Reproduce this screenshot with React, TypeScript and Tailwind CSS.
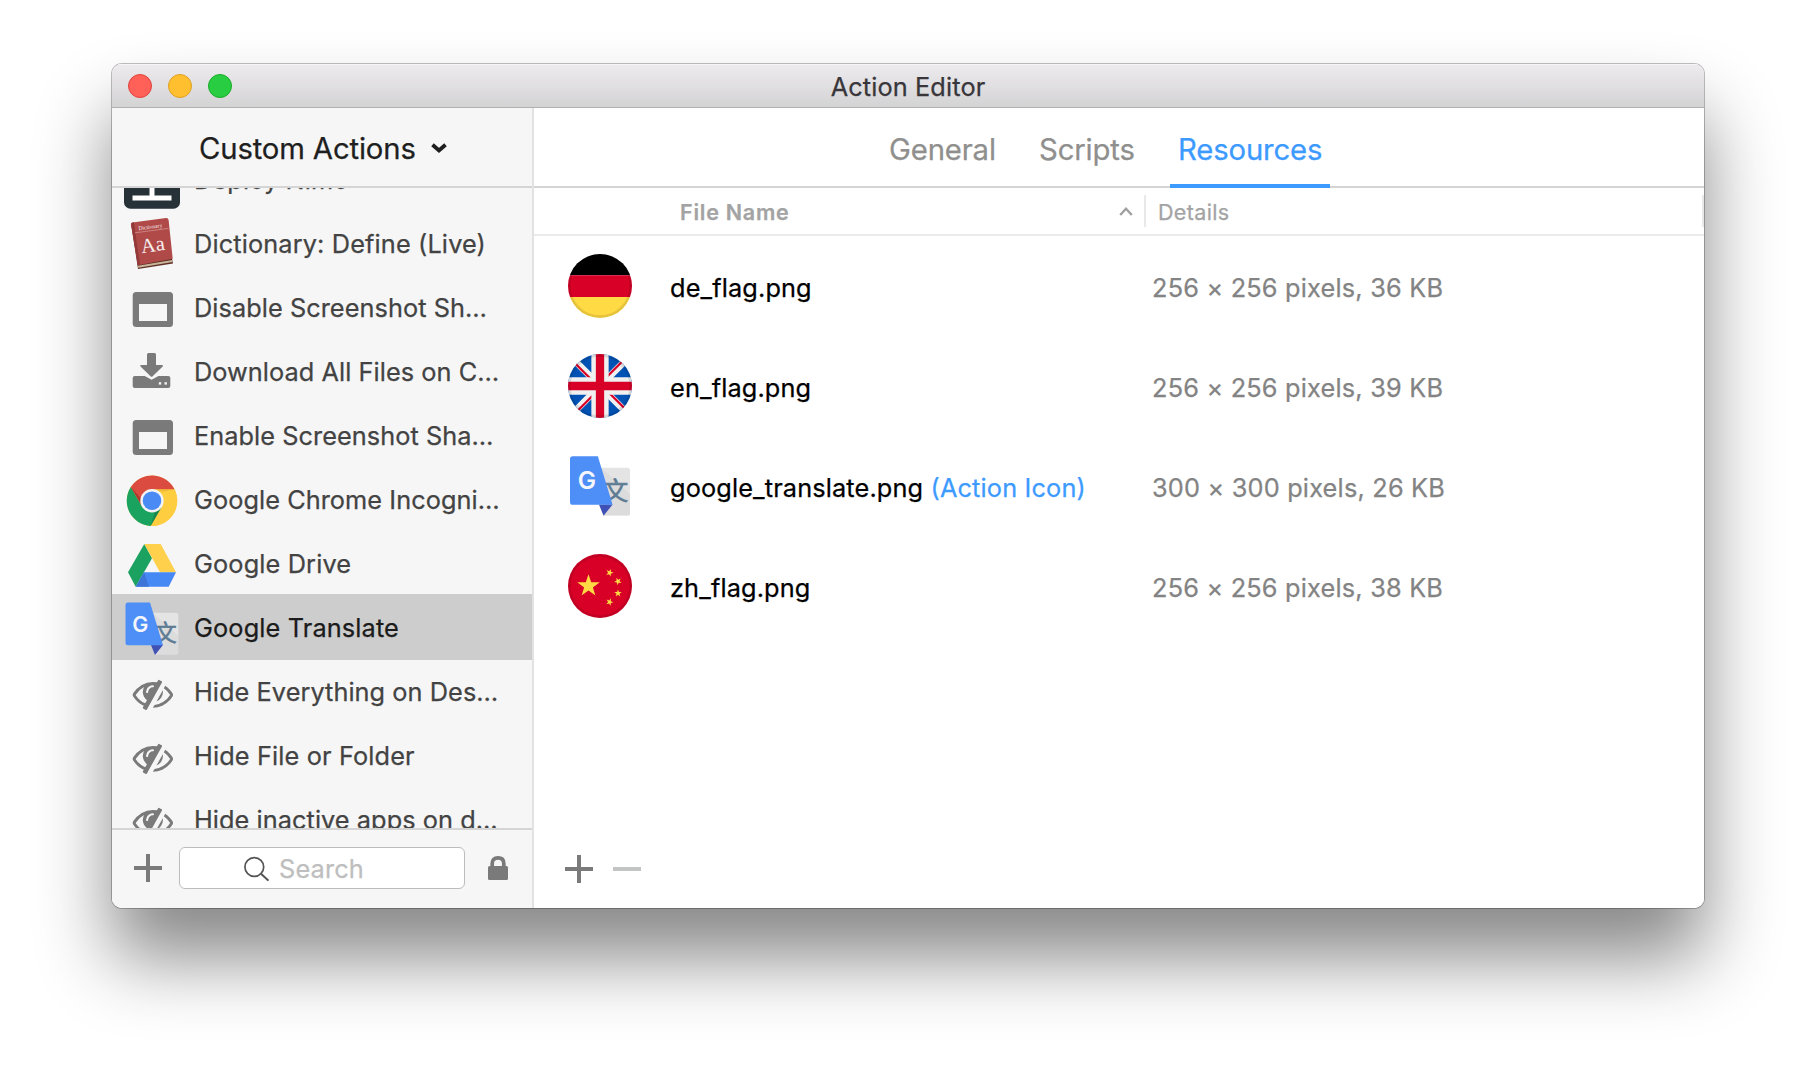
import { ReactNode } from "react";

const YELLOW = "#ffda44";
const RED = "#d80027";

function star(cx: number, cy: number, r: number, turn: number) {
  return Array.from({ length: 10 }, (_, i) => {
    const a = ((i * 36 - 90 + turn) * Math.PI) / 180;
    const d = i % 2 ? r * 0.39 : r;
    return `${(cx + d * Math.cos(a)).toFixed(2)},${(cy + d * Math.sin(a)).toFixed(2)}`;
  }).join(" ");
}

/* Sidebar icons share a 60x64 canvas whose x axis starts at 120. */
function RowIcon({ children }: { children: ReactNode }) {
  return (
    <svg viewBox="120 0 60 64" className="h-16 w-[60px] shrink-0">
      {children}
    </svg>
  );
}

function DeployIcon() {
  return (
    <RowIcon>
      <rect x="124" y="6" width="56" height="55.7" rx="6.5" fill="#263238" />
      <path d="M149.5 20h5v28.5h17v5h-39v-5h17z" fill="#fff" />
    </RowIcon>
  );
}

function DictionaryIcon() {
  return (
    <RowIcon>
      <path d="M131 12l7 46 35-5.500-1.200-6z" fill="#5e2f28" />
      <path d="M138 54.800l34.300-5.800.2 2-34.300 5.800z" fill="#c9b79a" />
      <path d="M132.500 11.400l33.500-4.300q2.200-.2 2.600 2l4.100 38.600-34.800 6.500-6.900-40.500q-.4-2 1.500-2.300z" fill="#b04a49" />
      <path d="M131.300 14l6.600 40.200 2.200-.4-6.200-42.600-1.400.2q-1.500.4-1.200 2.600z" fill="#94393a" />
      <path d="M135 21.800l33.400-4.400" stroke="#d99a96" strokeWidth=".7" />
      <g transform="rotate(-8 153 35)" fill="#f7eeee">
        <text x="152.800" y="40.500" fontSize="20.500" textAnchor="middle" fontFamily="Liberation Serif, serif">Aa</text>
        <text x="153" y="17.500" fontSize="5.600" textAnchor="middle" fontFamily="Liberation Serif, serif">Dictionary</text>
      </g>
    </RowIcon>
  );
}

function WindowIcon() {
  return (
    <RowIcon>
      <rect x="132.700" y="17" width="40.300" height="35" rx="3.500" fill="#7a7a7a" />
      <rect x="139" y="29" width="28" height="17" fill="#f6f6f6" />
    </RowIcon>
  );
}

function DownloadIcon() {
  return (
    <RowIcon>
      <rect x="132.700" y="37" width="37.600" height="12" rx="2" fill="#7a7a7a" />
      <path d="M142 35.500l9.600 5.300 9.600-5.300z" fill="#f6f6f6" />
      <path d="M147 15.500q0-1.500 1.500-1.500h6q1.500 0 1.500 1.500V26h6q1.700.3.700 1.600l-10.300 9.800q-.8.600-1.600 0l-10.300-9.800q-1-1.300.7-1.600h5.800z" fill="#7a7a7a" />
      <rect x="158.800" y="43.200" width="2.400" height="2.400" fill="#f6f6f6" />
      <rect x="164.500" y="43.200" width="2.400" height="2.400" fill="#f6f6f6" />
    </RowIcon>
  );
}

function ChromeIcon() {
  const blade = "M0-11.500H22.500A25.300 25.300 0 0 0-21.200-13.800L-9.960 5.750 0 0z";
  return (
    <RowIcon>
      <g transform="translate(152 33.700)">
        <circle r="25.200" fill="#ffcd40" />
        <path d={blade} fill="#ffcd40" transform="rotate(120)" />
        <path d={blade} fill="#1aa25f" transform="rotate(240)" />
        <path d={blade} fill="#dc4b3f" />
        <path d="M0-11.500H22.500L11-9z" fill="#e0a52e" opacity=".45" />
        <path d="M-21.200-13.800L-9.960 5.750-11.500-3z" fill="#8d2f25" opacity=".6" />
        <path d="M9.960 5.750L-1.300 25.200 3 11z" fill="#0f6b40" opacity=".5" />
        <circle r="11.700" fill="#f3f3f3" />
        <circle r="9.300" fill="#4a8af4" />
      </g>
    </RowIcon>
  );
}

function DriveIcon() {
  return (
    <RowIcon>
      <path d="M144.300 13L152 27.300 135.700 55.700 128 41.300z" fill="#1ba260" />
      <path d="M144.300 13h16.400L176 41.300h-16z" fill="#ffd04b" />
      <path d="M176 41.300l-7.300 14.400h-33L144 41.300z" fill="#4688f4" />
      <path d="M144 41.300l5 14.400h-13.300z" fill="#3a6fd0" opacity=".8" />
    </RowIcon>
  );
}

function TranslateArt() {
  return (
    <>
      <path d="M150 17.700h26q2.300 0 2.300 2.300v37.400q0 2.300-2.300 2.300h-20.800z" fill="#e4e4e5" />
      <path d="M153 18l25.300 23v16.400q0 2.300-2.300 2.300h-20.800L163 50z" fill="#d3d3d5" opacity=".5" />
      <text x="165.600" y="46.200" fontSize="22.500" textAnchor="middle" fill="#5d7b93" stroke="#5d7b93" strokeWidth=".5" fontFamily="Noto Sans CJK SC, sans-serif">文</text>
      <path d="M151 50h12l-8 10z" fill="#3f51b5" />
      <path d="M128 7.500h22L163 50.300h-35q-2.500 0-2.500-2.500V10q0-2.500 2.500-2.500z" fill="#4d8ff7" />
      <text x="140.300" y="36.700" fontSize="21.500" textAnchor="middle" fill="#f4f6fb" fontFamily="Inter, sans-serif" fontWeight="600">G</text>
    </>
  );
}

function TranslateIcon() {
  return (
    <RowIcon>
      <TranslateArt />
    </RowIcon>
  );
}

function HiddenIcon() {
  return (
    <RowIcon>
      <g transform="translate(132.700 14.300) scale(.0225)">
        <path
          fill="#7a7a7a"
          d="M555 1335l78-141q-87-63-136-159t-49-203q0-121 61-225-229 117-381 353 167 258 427 375zm389-759q0-20-14-34t-34-14q-125 0-214.500 89.500t-89.500 214.500q0 20 14 34t34 14 34-14 14-34q0-86 61-147t147-61q20 0 34-14t14-34zm363-191q0 7-1 9-106 189-316 567t-315 566l-49 89q-10 16-28 16-12 0-134-70-16-10-16-28 0-12 44-87-143-65-263.500-173t-208.500-245q-20-31-20-69t20-69q153-235 380-371t496-136q89 0 180 17l54-97q10-16 28-16 5 0 18 6t31 15.500 33 18.500 31.500 18.500 19.500 11.500q16 10 16 27zm37 447q0 139-79 253.500t-209 164.500l280-502q8 45 8 84zm448 128q0 35-20 69-39 64-109 145-150 172-347.500 267t-419.500 95l74-132q212-18 392.500-137t301.500-307q-115-179-282-294l63-112q95 64 182.500 153t144.500 184q20 34 20 69z"
        />
      </g>
    </RowIcon>
  );
}

function Flag({ id, children }: { id: string; children: ReactNode }) {
  return (
    <svg viewBox="0 0 64 64" className="size-16">
      <clipPath id={id}>
        <circle cx="32" cy="32" r="32" />
      </clipPath>
      <g clipPath={`url(#${id})`}>
        {children}
        <circle cx="32" cy="32" r="30.700" fill="none" stroke="#000" strokeOpacity=".1" strokeWidth="2.700" />
      </g>
    </svg>
  );
}

function GermanFlag() {
  return (
    <Flag id="flag-de">
      <path d="M0 0h64v21.300H0z" fill="#000" />
      <path d="M0 21.300h64v21.700H0z" fill={RED} />
      <path d="M0 43h64v21H0z" fill={YELLOW} />
    </Flag>
  );
}

function BritishFlag() {
  return (
    <Flag id="flag-en">
      <path d="M0 0h64v64H0z" fill="#0052b4" />
      <path d="M0 0l64 64M64 0L0 64" stroke="#f0f0f0" strokeWidth="6.800" />
      {["rotate(0 32 32)", "rotate(90 32 32)", "rotate(180 32 32)", "rotate(270 32 32)"].map((t) => (
        <path key={t} d="M5 7.300l19 19" stroke={RED} strokeWidth="2.300" transform={t} />
      ))}
      <path d="M32 0v64M0 32h64" stroke="#f0f0f0" strokeWidth="17.300" />
      <path d="M32 0v64M0 32h64" stroke={RED} strokeWidth="8.300" />
    </Flag>
  );
}

function ChineseFlag() {
  return (
    <Flag id="flag-zh">
      <path d="M0 0h64v64H0z" fill={RED} />
      <g fill={YELLOW}>
        <polygon points={star(20.5, 32, 11.8, 0)} />
        <polygon points={star(41.6, 18.7, 3.9, 20)} />
        <polygon points={star(50, 27.3, 3.9, 45)} />
        <polygon points={star(50, 39.3, 3.9, 0)} />
        <polygon points={star(41.6, 48, 3.9, 20)} />
      </g>
    </Flag>
  );
}

function TranslateFile() {
  return (
    <svg viewBox="125.500 7.500 52.800 52.500" className="size-15">
      <TranslateArt />
    </svg>
  );
}

function Plus() {
  return (
    <svg viewBox="0 0 28 28" className="size-7 shrink-0">
      <path d="M12 0h4v12h12v4H16v12h-4V16H0v-4h12z" fill="#7a7a7a" />
    </svg>
  );
}

const actions = [
  { name: "Deploy Nimo", Icon: DeployIcon },
  { name: "Dictionary: Define (Live)", Icon: DictionaryIcon },
  { name: "Disable Screenshot Sh…", Icon: WindowIcon },
  { name: "Download All Files on C…", Icon: DownloadIcon },
  { name: "Enable Screenshot Sha…", Icon: WindowIcon },
  { name: "Google Chrome Incogni…", Icon: ChromeIcon },
  { name: "Google Drive", Icon: DriveIcon },
  { name: "Google Translate", Icon: TranslateIcon, selected: true },
  { name: "Hide Everything on Des…", Icon: HiddenIcon },
  { name: "Hide File or Folder", Icon: HiddenIcon },
  { name: "Hide inactive apps on d…", Icon: HiddenIcon },
];

const files = [
  { name: "de_flag.png", details: "256 × 256 pixels, 36 KB", Icon: GermanFlag },
  { name: "en_flag.png", details: "256 × 256 pixels, 39 KB", Icon: BritishFlag },
  { name: "google_translate.png", note: "(Action Icon)", details: "300 × 300 pixels, 26 KB", Icon: TranslateFile },
  { name: "zh_flag.png", details: "256 × 256 pixels, 38 KB", Icon: ChineseFlag },
];

function TitleBar() {
  return (
    <header className="flex h-11 shrink-0 items-center border-b border-[#b3afb4] bg-linear-to-b from-[#edebee] to-[#d4d3d4] pl-4 shadow-[inset_0_1px_0_#f7f6f7]">
      <div className="flex w-[104px] shrink-0 gap-4">
        <i className="size-6 rounded-full border border-[#e0443e] bg-[#ff6058]" />
        <i className="size-6 rounded-full border border-[#dea123] bg-[#ffbf2f]" />
        <i className="size-6 rounded-full border border-[#1aab29] bg-[#29cd42]" />
      </div>
      <h1 className="flex-1 pt-0.5 pr-[120px] text-center text-[25.3px] tracking-[0.12px] text-[#38363a]">Action Editor</h1>
    </header>
  );
}

function Sidebar() {
  return (
    <aside className="flex w-[422px] shrink-0 flex-col border-r-2 border-[#e2e2e2] bg-[#f6f6f6]">
      <div className="flex h-20 shrink-0 items-center border-b-2 border-[#d5d5d5] pt-0.5 pl-[87px]">
        <span className="w-[232px] pt-0.5 text-[29.3px] tracking-[-0.16px] text-[#1f1f1f]">Custom Actions</span>
        <svg viewBox="0 0 16 10" className="h-2.5 w-4">
          <path d="M1.500 1.800L8 7.400l6.500-5.600" fill="none" stroke="#1f1f1f" strokeWidth="3.900" />
        </svg>
      </div>
      <div className="min-h-0 flex-1 overflow-hidden">
        <ul className="-mt-[41px]">
          {actions.map(({ name, Icon, selected }) => (
            <li
              key={name}
              className={
                selected
                  ? "flex h-16 items-center bg-[#cdcdcd] pl-2 text-[#1b1b1b] shadow-[0_-1px_0_#cdcdcd,0_1px_0_#cdcdcd]"
                  : "flex h-16 items-center pl-2 text-[#434343]"
              }
            >
              <Icon />
              <span
                className={
                  name.endsWith("…")
                    ? "ml-[14px] pt-0.5 text-[25.3px] whitespace-nowrap tracking-[0.06px]"
                    : "ml-[14px] pt-0.5 text-[25.3px] whitespace-nowrap tracking-[0.14px]"
                }
              >
                {name}
              </span>
            </li>
          ))}
        </ul>
      </div>
      <footer className="flex h-20 shrink-0 items-center border-t-2 border-[#d5d5d5] pb-0.5 pl-[22px]">
        <Plus />
        <div className="ml-[17px] flex h-[42px] w-[286px] items-center rounded-md border border-[#bcbcbc] bg-white pl-16">
          <svg viewBox="0 0 26 26" className="size-[26px] shrink-0">
            <circle cx="10.300" cy="12" r="9.400" fill="none" stroke="#555" strokeWidth="1.700" />
            <path d="M17 18.700l7.500 7" stroke="#555" strokeWidth="2" />
          </svg>
          <span className="ml-[9px] pt-0.5 text-[25.3px] tracking-[0.15px] text-[#bebebe]">Search</span>
        </div>
        <svg viewBox="0 0 20 24" className="ml-[23px] h-6 w-5">
          <path d="M4.200 11V7.500q0-5.600 5.800-5.600t5.800 5.600V11" fill="none" stroke="#7a7a7a" strokeWidth="3.700" />
          <rect y="10" width="20" height="14" rx="1.500" fill="#7a7a7a" />
        </svg>
      </footer>
    </aside>
  );
}

function Tabs() {
  return (
    <nav className="flex h-20 shrink-0 border-b-2 border-[#d4d4d4] pl-[347px] text-[29.3px] tracking-[-0.15px] text-[#8f8f8d]">
      <span className="flex w-[150px] items-center pt-1.5 pl-2">General</span>
      <span className="flex w-[139px] items-center pt-1.5 pl-2">Scripts</span>
      <span className="-mb-0.5 flex w-40 items-center border-b-4 border-[#3d9aff] pt-2 pl-2 text-[#3d9aff]">Resources</span>
    </nav>
  );
}

function FileTable() {
  return (
    <section className="flex-1">
      <div className="flex h-12 items-center border-b-2 border-[#ebebeb] pl-[146px] text-[21.5px] text-[#a3a3a3]">
        <span className="w-[439px] pt-0.5 font-semibold tracking-[0.75px]">File Name</span>
        <svg viewBox="0 0 14 9" className="h-[9px] w-3.5">
          <path d="M1.200 8L7 1.800 12.800 8" fill="none" stroke="#a0a0a0" strokeWidth="2.400" />
        </svg>
        <span className="ml-[11px] h-8 w-0.5 bg-[#e9e9e9]" />
        <span className="ml-[12px] flex-1 pt-0.5 tracking-[0.35px]">Details</span>
        <span className="h-8 w-0.5 bg-[#e9e9e9]" />
      </div>
      {files.map(({ name, note, details, Icon }) => (
        <div key={name} className="flex h-[100px] items-center text-[25.3px] whitespace-nowrap">
          <div className="ml-[34px] flex w-16 justify-center">
            <Icon />
          </div>
          <div className="ml-[38px] w-[482px] pt-[3px] tracking-[0.14px] text-black">
            {name} {note && <span className="tracking-[0.16px] text-[#3d9aff]">{note}</span>}
          </div>
          <div className="pt-[3px] tracking-[0.2px] text-[#838383]">{details}</div>
        </div>
      ))}
    </section>
  );
}

export default function App() {
  return (
    <div className="h-[1068px] w-[1816px] overflow-hidden bg-white pt-16 pl-28 font-['Inter',sans-serif] [-webkit-text-stroke:0.25px]">
      <div className="h-[844px] w-[1592px] rounded-[10px] shadow-[0_0_0_1px_rgba(0,0,0,0.25),0_50px_74px_rgba(0,0,0,0.47)]">
        <div className="flex h-full flex-col overflow-hidden rounded-[10px] bg-white">
          <TitleBar />
          <div className="flex min-h-0 flex-1">
            <Sidebar />
            <main className="flex min-w-0 flex-1 flex-col bg-white">
              <Tabs />
              <FileTable />
              <div className="flex h-[78px] shrink-0 items-center gap-5 pl-[31px]">
                <Plus />
                <span className="h-1 w-7 bg-[#c3c5c5]" />
              </div>
            </main>
          </div>
        </div>
      </div>
    </div>
  );
}
